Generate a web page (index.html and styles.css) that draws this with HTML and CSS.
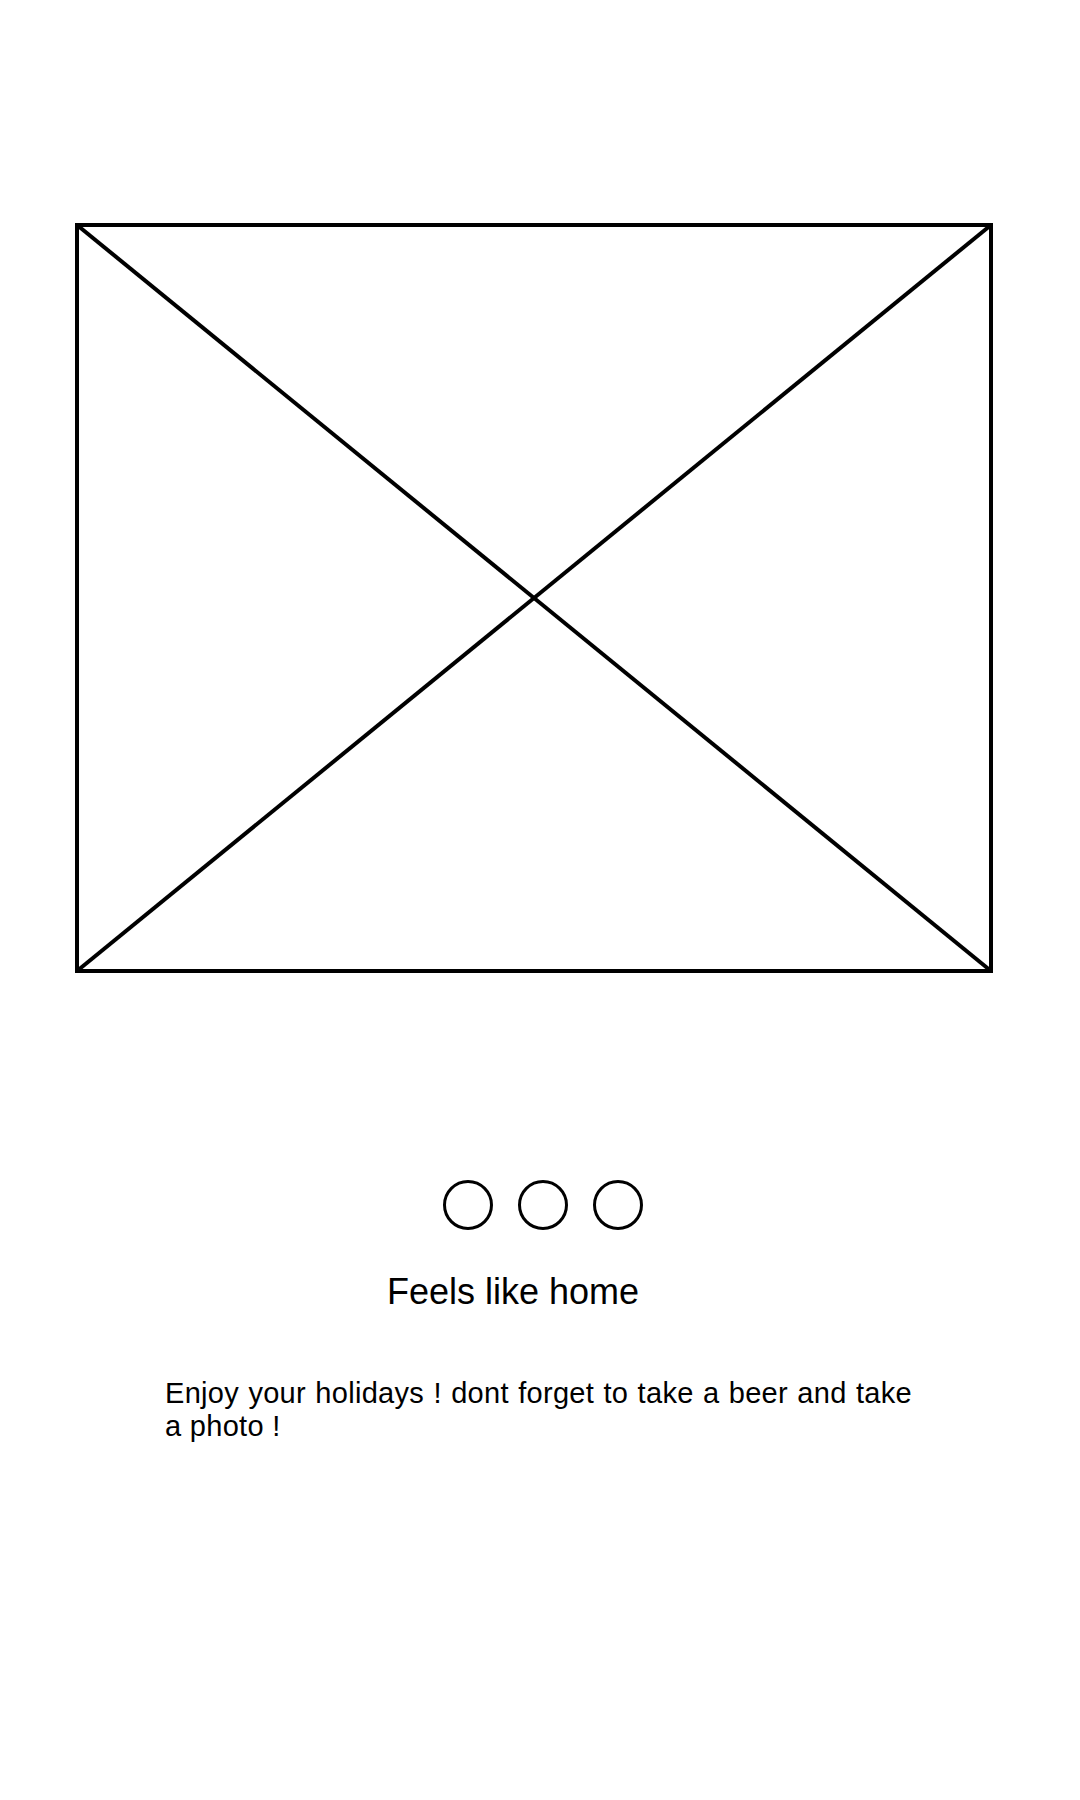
FILE: index.html
```html
<!DOCTYPE html>
<html lang="en">
<head>
    <meta charset="UTF-8">
    <meta name="viewport" content="width=device-width, initial-scale=1.0">
    <title>Feels like home</title>
    <link rel="stylesheet" href="styles.css">
</head>
<body>
    <div class="slide">
        <svg class="placeholder" viewBox="0 0 918 750" width="918" height="750">
            <rect x="2" y="2" width="914" height="746" fill="none" stroke="#000" stroke-width="4"/>
            <line x1="2" y1="2" x2="916" y2="748" stroke="#000" stroke-width="4"/>
            <line x1="916" y1="2" x2="2" y2="748" stroke="#000" stroke-width="4"/>
        </svg>
    </div>

    <div class="dots">
        <span class="dot"></span>
        <span class="dot"></span>
        <span class="dot"></span>
    </div>

    <h1 class="title">Feels like home</h1>

    <p class="text">Enjoy your holidays ! dont forget to take a beer and take a photo !</p>
</body>
</html>
```

FILE: styles.css
```css
body {
    font-family: Arial, "Liberation Sans", sans-serif;
    background-color: #ffffff;
    color: #000000;
    margin: 0;
}
.slide {
    padding-top: 223px;
    padding-left: 75px;
}
.placeholder {
    display: block;
}
.dots {
    display: flex;
    justify-content: center;
    gap: 25px;
    margin-top: 207px;
    padding-left: 6px;
}
.dot {
    width: 44px;
    height: 44px;
    border: 3px solid #000;
    border-radius: 50%;
}
.title {
    font-size: 36px;
    font-weight: normal;
    line-height: 40px;
    margin: 42px 0 0 387px;
}
.text {
    width: 747px;
    font-size: 29px;
    line-height: 33px;
    letter-spacing: 0.3px;
    text-align: justify;
    margin: 65px 0 0 165px;
}
```
